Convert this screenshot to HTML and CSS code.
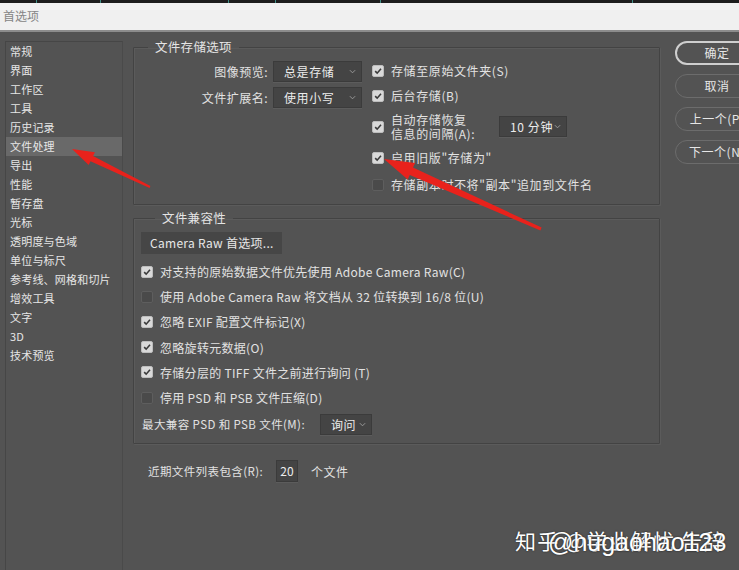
FILE: index.html
```html
<!DOCTYPE html>
<html lang="zh-CN">
<head>
<meta charset="utf-8">
<title>首选项</title>
<link rel="stylesheet" href="styles.css">
</head>
<body>
<div class="screen">
  <div class="top-strip"></div>
  <div class="titlebar">首选项</div>
  <div class="dialog">
    <ul class="sidebar">
      <li>常规</li>
      <li>界面</li>
      <li>工作区</li>
      <li>工具</li>
      <li>历史记录</li>
      <li class="active">文件处理</li>
      <li>导出</li>
      <li>性能</li>
      <li>暂存盘</li>
      <li>光标</li>
      <li>透明度与色域</li>
      <li>单位与标尺</li>
      <li>参考线、网格和切片</li>
      <li>增效工具</li>
      <li>文字</li>
      <li>3D</li>
      <li>技术预览</li>
    </ul>

    <div class="main">
      <fieldset class="group group-save">
        <legend>文件存储选项</legend>
        <div class="save-grid">
          <div class="save-left">
            <div class="field-row">
              <span class="field-label">图像预览:</span>
              <div class="select w-89"><span>总是存储</span><svg class="chev" viewBox="0 0 8 5"><path d="M1 1 L4 4 L7 1"/></svg></div>
            </div>
            <div class="field-row">
              <span class="field-label">文件扩展名:</span>
              <div class="select w-89"><span>使用小写</span><svg class="chev" viewBox="0 0 8 5"><path d="M1 1 L4 4 L7 1"/></svg></div>
            </div>
          </div>
          <div class="save-right">
            <div class="check-row"><span class="cb on"><svg viewBox="0 0 12 12"><path d="M2.6 6.2 L5 8.6 L9.6 3.4"/></svg></span><span class="cb-text">存储至原始文件夹(S)</span></div>
            <div class="check-row"><span class="cb on"><svg viewBox="0 0 12 12"><path d="M2.6 6.2 L5 8.6 L9.6 3.4"/></svg></span><span class="cb-text">后台存储(B)</span></div>
            <div class="check-row tall"><span class="cb on"><svg viewBox="0 0 12 12"><path d="M2.6 6.2 L5 8.6 L9.6 3.4"/></svg></span><span class="cb-text two-line">自动存储恢复<br>信息的间隔(A):</span><div class="select w-68"><span>10 分钟</span><svg class="chev" viewBox="0 0 8 5"><path d="M1 1 L4 4 L7 1"/></svg></div></div>
            <div class="check-row"><span class="cb on"><svg viewBox="0 0 12 12"><path d="M2.6 6.2 L5 8.6 L9.6 3.4"/></svg></span><span class="cb-text">启用旧版"存储为"</span></div>
            <div class="check-row last"><span class="cb"></span><span class="cb-text">存储副本时不将"副本"追加到文件名</span></div>
          </div>
        </div>
      </fieldset>

      <fieldset class="group group-compat">
        <legend>文件兼容性</legend>
        <div class="btn-flat">Camera Raw 首选项...</div>
        <div class="compat-list">
          <div class="check-row c"><span class="cb on"><svg viewBox="0 0 12 12"><path d="M2.6 6.2 L5 8.6 L9.6 3.4"/></svg></span><span class="cb-text">对支持的原始数据文件优先使用 Adobe Camera Raw(C)</span></div>
          <div class="check-row c"><span class="cb"></span><span class="cb-text">使用 Adobe Camera Raw 将文档从 32 位转换到 16/8 位(U)</span></div>
          <div class="check-row c"><span class="cb on"><svg viewBox="0 0 12 12"><path d="M2.6 6.2 L5 8.6 L9.6 3.4"/></svg></span><span class="cb-text">忽略 EXIF 配置文件标记(X)</span></div>
          <div class="check-row c"><span class="cb on"><svg viewBox="0 0 12 12"><path d="M2.6 6.2 L5 8.6 L9.6 3.4"/></svg></span><span class="cb-text">忽略旋转元数据(O)</span></div>
          <div class="check-row c"><span class="cb on"><svg viewBox="0 0 12 12"><path d="M2.6 6.2 L5 8.6 L9.6 3.4"/></svg></span><span class="cb-text">存储分层的 TIFF 文件之前进行询问 (T)</span></div>
          <div class="check-row c"><span class="cb"></span><span class="cb-text">停用 PSD 和 PSB 文件压缩(D)</span></div>
          <div class="max-row">
            <span class="max-label">最大兼容 PSD 和 PSB 文件(M):</span>
            <div class="select w-52"><span>询问</span><svg class="chev" viewBox="0 0 8 5"><path d="M1 1 L4 4 L7 1"/></svg></div>
          </div>
        </div>
      </fieldset>

      <div class="recent-row">
        <span class="recent-label">近期文件列表包含(R):</span>
        <span class="num-input">20</span>
        <span class="recent-unit">个文件</span>
      </div>
    </div>

    <div class="actions">
      <div class="pill default">确定</div>
      <div class="pill">取消</div>
      <div class="pill">上一个(P)</div>
      <div class="pill">下一个(N)</div>
    </div>
  </div>

  <svg class="annotations" viewBox="0 0 739 570" width="739" height="570">
    <polygon class="arrow" points="72,149 94.9,152.3 93.1,155.9 150.4,186.1 149.6,187.9 90.5,161.3 88.7,164.9"/>
    <polygon class="arrow" points="384,159 415.1,163 413,167.5 541.6,227.6 540.4,230.4 409.8,174.9 407.7,179.4"/>
  </svg>

  <div class="watermark">
    <span class="wm-a">知乎 @学业解忧 告辞</span>
    <span class="wm-b">@hugaohao123</span>
  </div>
</div>
</body>
</html>
```
FILE: styles.css
```css
* { box-sizing: border-box; }

html, body {
  margin: 0;
  padding: 0;
  background: #535353;
}

body {
  font-family: "Noto Sans CJK SC", "Noto Sans", sans-serif;
  color: #e2e2e2;
  font-size: 12px;
}

.screen {
  position: relative;
  width: 739px;
  height: 570px;
  overflow: hidden;
  background: #535353;
}

.top-strip {
  height: 3px;
  background:
    linear-gradient(90deg, transparent 0 36px, #3f8d86 36px 37px, transparent 37px 100px, #3f8d86 100px 101px, transparent 101px 228px, #3f8d86 228px 229px, transparent 229px 275px, #3f8d86 275px 276px, transparent 276px 380px, #3f8d86 380px 381px, transparent 381px 632px, #3f8d86 632px 633px, transparent 633px),
    #1c1c1c;
}

.titlebar {
  height: 29px;
  line-height: 26px;
  padding-left: 3px;
  background: #f0f0f0;
  color: #858585;
  font-size: 12px;
  border-bottom: 2px solid #8c8c8c;
}

.dialog {
  display: flex;
  align-items: flex-start;
  height: 538px;
}

/* sidebar */
.sidebar {
  list-style: none;
  margin: 9px 0 0 5px;
  padding: 0;
  width: 118px;
  height: 540px;
  flex: none;
  border: 1px solid #464646;
  border-right-color: #4a4a4a;
}

.sidebar li {
  height: 19px;
  line-height: 18px;
  padding-left: 4px;
  font-size: 11px;
  letter-spacing: 0.2px;
  color: #e6e6e6;
}

.sidebar li.active {
  background: #696969;
}

/* main */
.main {
  flex: none;
  width: 527px;
  margin-left: 10px;
  padding-top: 7px;
}

.group {
  margin: 0;
  border: 1px solid #434343;
  box-shadow: 1px 1px 0 #5b5b5b, inset 1px 1px 0 #5b5b5b;
  border-radius: 1px;
  min-width: 0;
}

.group legend {
  margin-left: 14px;
  padding: 0 7px;
  height: 16px;
  line-height: 16px;
  font-size: 12.5px;
  letter-spacing: 0.3px;
  color: #e4e4e4;
}

.group-save {
  padding: 3px 0 7px 0;
}

.save-grid {
  display: flex;
}

.save-left {
  width: 232px;
  flex: none;
  padding-right: 4px;
}

.field-row {
  height: 26px;
  display: flex;
  align-items: center;
  justify-content: flex-end;
  gap: 5px;
}

.field-label {
  font-size: 12px;
  letter-spacing: 0.5px;
}

.select {
  height: 21px;
  display: flex;
  align-items: center;
  justify-content: space-between;
  padding: 0 5px 0 10px;
  background: #444444;
  border: 1px solid #3b3b3b;
  box-shadow: 0 1px 0 #5c5c5c;
  color: #ececec;
  font-size: 12px;
  letter-spacing: 0.6px;
}

.select .chev {
  width: 7px;
  height: 5px;
  fill: none;
  stroke: #9a9a9a;
  stroke-width: 1.1;
}

.w-89 { width: 89px; }
.w-68 { width: 68px; }
.w-52 { width: 52px; }

.save-right {
  padding-left: 6px;
}

.check-row {
  height: 25px;
  display: flex;
  align-items: center;
}

.check-row.tall {
  height: 37px;
}

.check-row.last {
  height: 27px;
  padding-top: 2px;
}

.check-row.c {
  height: 25.2px;
}

.cb {
  flex: none;
  width: 12px;
  height: 12px;
  border-radius: 2px;
  background: #4a4a4a;
  border: 1px solid #5e5e5e;
  display: flex;
  align-items: center;
  justify-content: center;
}

.cb.on {
  background: #d9d9d9;
  border-color: #bdbdbd;
}

.cb svg {
  width: 12px;
  height: 12px;
  fill: none;
  stroke: #3a3a3a;
  stroke-width: 1.9;
}

.cb-text {
  margin-left: 7px;
  font-size: 12px;
  letter-spacing: 0.6px;
  white-space: nowrap;
}

.cb-text.two-line {
  width: 108px;
  line-height: 13.5px;
  flex: none;
}

.group-compat {
  margin-top: 5px;
  padding: 6px 0 6px 7px;
}

.btn-flat {
  width: 141px;
  height: 22px;
  line-height: 22px;
  padding-left: 9px;
  background: #464646;
  color: #e8e8e8;
  font-size: 12px;
  letter-spacing: 0.3px;
}

.compat-list {
  margin-top: 5px;
}

.compat-list .check-row .cb-text {
  letter-spacing: 0.3px;
}

.max-row {
  height: 27px;
  padding-top: 1px;
  display: flex;
  align-items: center;
  padding-left: 1px;
}

.max-label {
  width: 178px;
  font-size: 11.5px;
  letter-spacing: 0.4px;
}

.recent-row {
  margin-top: 16px;
  padding-left: 15px;
  height: 22px;
  display: flex;
  align-items: center;
}

.recent-label {
  font-size: 11.5px;
  letter-spacing: 0.4px;
  width: 128px;
}

.num-input {
  width: 22px;
  height: 22px;
  line-height: 20px;
  text-align: center;
  background: #444444;
  border: 1px solid #3b3b3b;
  box-shadow: 0 1px 0 #5c5c5c;
  font-size: 12px;
  color: #ededed;
}

.recent-unit {
  margin-left: 13px;
  font-size: 12px;
  letter-spacing: 0.5px;
}

/* right actions */
.actions {
  flex: none;
  margin-left: 15px;
  margin-top: 9px;
  display: flex;
  flex-direction: column;
  gap: 9px;
}

.pill {
  width: 84px;
  height: 24px;
  line-height: 22px;
  border: 1.5px solid #6c6c6c;
  border-radius: 12px;
  text-align: center;
  font-size: 12px;
  letter-spacing: 0.5px;
  color: #e6e6e6;
  white-space: nowrap;
}

.pill.default {
  border: 2px solid #cfcfcf;
  line-height: 20px;
}

/* overlays */
.annotations {
  position: absolute;
  left: 0;
  top: 0;
  pointer-events: none;
}

.arrow {
  fill: #e8221c;
}

.watermark {
  position: absolute;
  left: 515px;
  top: 524px;
  width: 230px;
  height: 34px;
  pointer-events: none;
}

.wm-a,
.wm-b {
  position: absolute;
  white-space: nowrap;
  color: #ffffff;
  text-shadow: 0 0 2px rgba(0, 0, 0, 0.6);
}

.wm-a {
  left: 0;
  top: 0;
  font-size: 21px;
  line-height: 32px;
  letter-spacing: 1.2px;
}

.wm-b {
  left: 33px;
  top: 3px;
  font-family: "Liberation Sans", sans-serif;
  font-size: 25px;
  line-height: 30px;
}
```
